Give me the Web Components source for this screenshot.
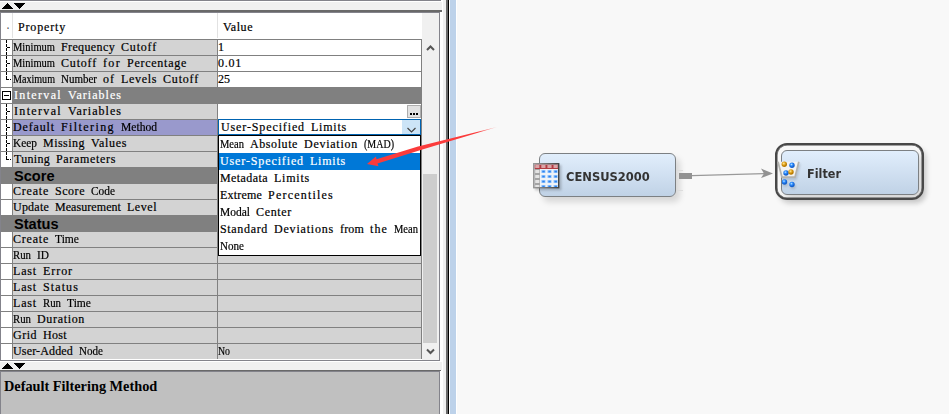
<!DOCTYPE html>
<html lang="en"><head><meta charset="utf-8"><title>Properties</title>
<style>body{margin:0;background:#f8f8f8;overflow:hidden}</style></head><body>
<miner-workspace></miner-workspace>
<script>
function define(name, html, setup) {
  customElements.define(name, class extends HTMLElement {
    constructor() { super(); this.attachShadow({mode: 'open'}); }
    connectedCallback() {
      this.shadowRoot.innerHTML = html;
      if (setup) setup(this, this.shadowRoot);
    }
  });
}

const gauge = document.createElement('canvas').getContext('2d');
gauge.font = '12px "Liberation Serif"';

// Sets serif words on a 6px-per-character grid.
define('mono-text', `<style>
:host{display:block;white-space:pre;height:15px;font:12px/14px "Liberation Serif","Times New Roman",serif;word-spacing:3px;-webkit-text-stroke:.2px currentColor}
span{display:inline-block;transform-origin:0 0;height:14px;vertical-align:top}
</style>`, (el, root) => {
  el.textContent.split(' ').forEach((word, i) => {
    if (i) root.append(' ');
    const span = document.createElement('span'), want = word.length * 6, has = gauge.measureText(word).width;
    span.textContent = word;
    span.style.width = want + 'px';
    if (has > want) span.style.transform = `scaleX(${want / has})`;
    else span.style.letterSpacing = (want - has) / word.length + 'px';
    root.append(span);
  });
});

define('pane-divider', `<style>
:host{display:block;height:8px;background:#f0f0f0;width:442px;flex:none}
svg{display:block}
</style><svg width="30" height="8" shape-rendering="crispEdges"><path d="M2 7L7.5 1L13 7zM13 1H25L19 7z"/></svg>`);

define('tree-mark', `<style>
:host{display:block;width:11px;height:100%;background:#fff}
svg{display:block}
</style><svg width="11" height="15" shape-rendering="crispEdges"></svg>`, (el, root) => {
  const svg = root.querySelector('svg'), kind = el.getAttribute('kind');
  const dash = 'stroke="#000" fill="none" stroke-dasharray="3 1"';
  if (kind === 'mid') svg.innerHTML = `<path d="M5.5 0V15" ${dash}/><path d="M6 7.5H10" ${dash}/>`;
  if (kind === 'end') svg.innerHTML = `<path d="M5.5 0V7" ${dash}/><path d="M5 7.5H10" ${dash}/>`;
  if (kind === 'box') svg.innerHTML = '<path d="M0 0H11V15H0z" fill="#fff"/><path d="M1.5 3.5h8v8h-8zM3 7.5h5" stroke="#000" fill="#fff"/>';
});

define('property-row', `<style>
:host{display:grid;grid-template-columns:11px 205px 205px;height:16px;box-sizing:border-box;border-top:1px solid #808080;background:#d3d3d3}
.name,.value{border-left:1px solid #808080;overflow:hidden;height:15px}
.value{border-right:1px solid #808080;box-sizing:border-box}
.name{box-sizing:border-box}
:host([editable]) .value{background:#fff}
:host([selected]) .name{background:#9999cc}
:host([group]){background:#808080;color:#fff;border-color:#808080}
:host([heading]){background:#808080;grid-template-columns:11px 1fr}
:host([heading]) .value{display:none}
:host([heading]) .name{font:bold 14.6px/16px "Liberation Sans",Arial,sans-serif;padding-left:1px;overflow:visible}
:host([group]) .name,:host([indent]) .name{padding-left:1px}
</style><div class="name"></div><div class="value"><slot></slot></div>`, (el, root) => {
  const mark = document.createElement('tree-mark');
  mark.setAttribute('kind', el.getAttribute('tree') || '');
  if (el.hasAttribute('heading')) mark.style.background = '#808080';
  const name = root.querySelector('.name'), label = el.getAttribute('label');
  name.before(mark);
  if (el.hasAttribute('heading')) name.textContent = label;
  else { const t = document.createElement('mono-text'); t.textContent = label; name.append(t); }
});

define('scroll-bar', `<style>
:host{display:flex;flex-direction:column;width:17px;background:#f0f0f0;box-sizing:border-box;padding:27px 2px 0 1px}
.track{flex:1;padding-top:118px;box-sizing:border-box;display:flex}
.thumb{background:#cdcdcd;flex:1}
svg{display:block;flex:none}
</style><svg width="15" height="16"><path d="M4 10L7.5 6.5L11 10" fill="none" stroke="#555" stroke-width="2"/></svg>
<div class="track"><div class="thumb"></div></div>
<svg width="15" height="17"><path d="M4 6.5L7.5 10L11 6.5" fill="none" stroke="#555" stroke-width="2"/></svg>`);

define('choice-item', `<style>
:host{display:block;height:17px;padding:1px 0 0 1px;box-sizing:border-box;overflow:hidden}
:host([chosen]){background:#0078d7;color:#fff}
</style>`, (el, root) => {
  const t = document.createElement('mono-text');
  t.textContent = el.textContent;
  root.append(t);
});

define('choice-box', `<style>
:host{display:block;position:absolute;left:218px;top:119px;width:203px}
.box{height:16px;box-sizing:border-box;border:1px solid #0063b1;background:#fff;display:flex;justify-content:space-between;padding-left:2px}
.arrow{width:18px;height:14px;background:#cce4f7}
svg{display:block}
.list{border:1px solid #000;background:#fff;height:121px;box-sizing:border-box}
</style><div class="box"><mono-text>User-Specified Limits</mono-text><div class="arrow"><svg width="18" height="14"><path d="M5.5 8L9.5 12L13.5 8" fill="none" stroke="#444" stroke-width="1.2"/></svg></div></div>
<div class="list"><slot></slot></div>`);

define('property-panel', `<style>
:host{display:flex;flex-direction:column;width:443px;height:414px;background:#fff;position:relative;color:#000}
.top{height:1px;background:#83838b;margin-bottom:1px;width:441px}
.rule{height:2px;width:442px;background:#696969}
.sheet{display:flex;box-sizing:border-box;width:440px;height:349px;border:1px solid #83838b;margin-bottom:1px}
.rows{width:421px;display:flex;flex-direction:column}
.head{height:26px;display:grid;grid-template-columns:11px 205px 1fr;background:#fff;flex:none}
.head mono-text{padding:7px 0 0 5px;height:18px;border-left:1px solid #e2e2e2}
.head span{font:10px/27px "Liberation Mono",monospace;color:#555;padding-left:4px}
.more{display:block;float:right;width:14px;height:13px;margin-top:1px;box-sizing:border-box;border:1px solid #adadad;background:#e1e1e1}
.more svg{display:block}
.rule2{height:1px;width:441px;background:#696969}
.help{width:440px;flex:1;box-sizing:border-box;border:1px solid #83838b;border-bottom:0;background:#c0c0c0;padding:5px 3px;font:bold 14.3px/18px "Liberation Serif","Times New Roman",serif}
</style>
<div class="top"></div><pane-divider></pane-divider><div class="rule"></div>
<div class="sheet"><div class="rows">
<div class="head"><span>.</span><mono-text>Property</mono-text><mono-text>Value</mono-text></div>
<property-row editable tree="mid" label="Minimum Frequency Cutoff"><mono-text>1</mono-text></property-row>
<property-row editable tree="mid" label="Minimum Cutoff for Percentage"><mono-text>0.01</mono-text></property-row>
<property-row editable tree="end" label="Maximum Number of Levels Cutoff"><mono-text>25</mono-text></property-row>
<property-row group tree="box" label="Interval Variables"></property-row>
<property-row editable indent tree="mid" label="Interval Variables"><span class="more"><svg width="12" height="11" shape-rendering="crispEdges"><path d="M2 7h2v2H2zM5 7h2v2H5zM8 7h2v2H8z"/></svg></span></property-row>
<property-row selected tree="mid" label="Default Filtering Method"></property-row>
<property-row tree="mid" label="Keep Missing Values"></property-row>
<property-row indent tree="end" label="Tuning Parameters"></property-row>
<property-row heading label="Score"></property-row>
<property-row label="Create Score Code"></property-row>
<property-row label="Update Measurement Level"></property-row>
<property-row heading label="Status"></property-row>
<property-row label="Create Time"></property-row>
<property-row label="Run ID"></property-row>
<property-row label="Last Error"></property-row>
<property-row label="Last Status"></property-row>
<property-row label="Last Run Time"></property-row>
<property-row label="Run Duration"></property-row>
<property-row label="Grid Host"></property-row>
<property-row label="User-Added Node"><mono-text>No</mono-text></property-row>
</div><scroll-bar></scroll-bar></div>
<pane-divider></pane-divider><div class="rule2"></div>
<div class="help">Default Filtering Method</div>
<choice-box><choice-item>Mean Absolute Deviation (MAD)</choice-item><choice-item chosen>User-Specified Limits</choice-item><choice-item>Metadata Limits</choice-item><choice-item>Extreme Percentiles</choice-item><choice-item>Modal Center</choice-item><choice-item>Standard Deviations from the Mean</choice-item><choice-item>None</choice-item></choice-box>`);

define('split-edge', `<style>
:host{display:block;width:14px;height:414px;background:linear-gradient(90deg,#f0f0f0 0 3px,#696969 3px 5px,#000 5px 6px,#fff 6px 7px,#bdd2ea 7px 13px,#fff 13px)}
</style>`);

define('flow-node', `<style>
:host{display:flex;align-items:center;position:absolute;box-sizing:border-box;width:137px;height:44px;border:1px solid #7c8083;border-radius:6px;background:linear-gradient(#e1eefc,#c0d2e6);box-shadow:4px 5px 6px #0002;font:bold 12.5px "DejaVu Sans",sans-serif;color:#333;padding:2px 0 0 26px}
:host([picked])::before{content:"";position:absolute;inset:-8px -6px -6px -7px;border:2px solid #484848;border-radius:12px;box-shadow:3px 4px 5px #0002,inset 0 0 0 .5px #484848}
.icon{position:absolute;left:-8px;top:8px}
:host([picked]) .icon{left:-6px;top:9px}
:host([picked]){padding-left:25px}
b{display:inline-block;transform:scaleX(var(--fit,1));transform-origin:0 0}
</style><div class="icon"><slot name="icon"></slot></div><b><slot></slot></b>`);

define('table-icon', `<style>:host{display:block}svg{display:block;filter:drop-shadow(2px 2px 1px #0003)}</style>
<svg width="28" height="28"><defs><linearGradient id="g"><stop stop-color="#999"/><stop offset="1" stop-color="#444"/></linearGradient></defs><g id="c"></g><rect x="1.7" y="1.7" width="25" height="24" fill="none" stroke="url(#g)" stroke-width="1.4"/></svg>`, (el, root) => {
  let s = '<path d="M2 2h24.500v24h-24.500z" fill="#eef2f7"/><path d="M2.500 2.500h23.500v4.500h-23.500z" fill="#b33c43"/><path d="M2.500 7h5.500v18.500h-5.500z" fill="#a4a4a4"/>';
  for (let r = 0; r < 5; r++) for (let c = 0; c < 4; c++) {
    const x = 3.2 + c * 6.1, y = 3 + r * 5;
    s += `<rect x="${x}" y="${y}" width="4.2" height="3" rx=".6" fill="${r === 0 ? '#dba5a8' : c === 0 ? '#e4e4e4' : '#9bc9ff'}"/>`;
    if (r && c) s += `<rect x="${x + 1}" y="${y + .7}" width="2.4" height="1.7" fill="#2c83ee"/>`;
  }
  root.querySelector('#c').innerHTML = s;
});

define('filter-icon', `<style>:host{display:block}svg{display:block;filter:drop-shadow(1px 2px 1px #0002)}</style>
<svg width="26" height="30"><defs><radialGradient id="b" cx=".4" cy=".35"><stop stop-color="#b7e4ff"/><stop offset=".5" stop-color="#2d8cff"/><stop offset="1" stop-color="#1560cc"/></radialGradient><radialGradient id="y" cx=".4" cy=".35"><stop stop-color="#ffe9a0"/><stop offset=".5" stop-color="#e6ac26"/><stop offset="1" stop-color="#b87a00"/></radialGradient></defs>
<path d="M2 1.700L6 17.200H19L22.800 1.700" fill="#f3f3f1" stroke="#b3b3af" stroke-width="1.700"/>
<circle cx="8.300" cy="4.300" r="2.700" fill="url(#y)"/><circle cx="16" cy="5.300" r="2.700" fill="url(#b)"/><circle cx="10" cy="13" r="2.700" fill="url(#b)"/><circle cx="15" cy="12" r="2.700" fill="url(#y)"/><circle cx="8.500" cy="22" r="2.700" fill="url(#b)"/><circle cx="16" cy="24.500" r="2.700" fill="url(#b)"/></svg>`);

define('flow-canvas', `<style>
:host{display:block;flex:1;position:relative;background:#f8f8f8;height:414px}
svg.link{position:absolute;left:218px;top:0}
.a{left:82px;top:153px;--fit:.92}
.b{left:324px;top:150px;width:138px;height:45px;--fit:.9}
</style>
<flow-node class="a"><table-icon slot="icon"></table-icon>CENSUS2000</flow-node>
<flow-node class="b" picked><filter-icon slot="icon"></filter-icon>Filter</flow-node>
<svg class="link" width="110" height="220"><path d="M2 170.500H8M2 190.500H8" stroke="#ddd"/><path d="M4 173H17V179H4z" fill="#929292"/><path d="M17 175.600L90 173.500" stroke="#999" stroke-width="1.300"/><path d="M86 168.500L98 173.500L86 178L89 173.500z" fill="#929292"/></svg>`);

define('pointer-arrow', `<style>:host{display:block;position:absolute;left:360px;top:120px}svg{display:block}</style>
<svg width="145" height="50"><defs><linearGradient id="f"><stop offset=".85" stop-color="#fb3b3b"/><stop offset="1" stop-color="#fb3b3b" stop-opacity=".4"/></linearGradient></defs><path d="M7 44L16 36.500L16.500 39.300L58 26.500L137 7L64 29L17.500 43.500L18.500 46.300z" fill="url(#f)"/></svg>`);

define('miner-workspace', `<style>:host{display:flex;position:relative;width:949px;height:414px;overflow:hidden}</style>
<property-panel></property-panel><split-edge></split-edge><flow-canvas></flow-canvas><pointer-arrow></pointer-arrow>`);
</script></body></html>
